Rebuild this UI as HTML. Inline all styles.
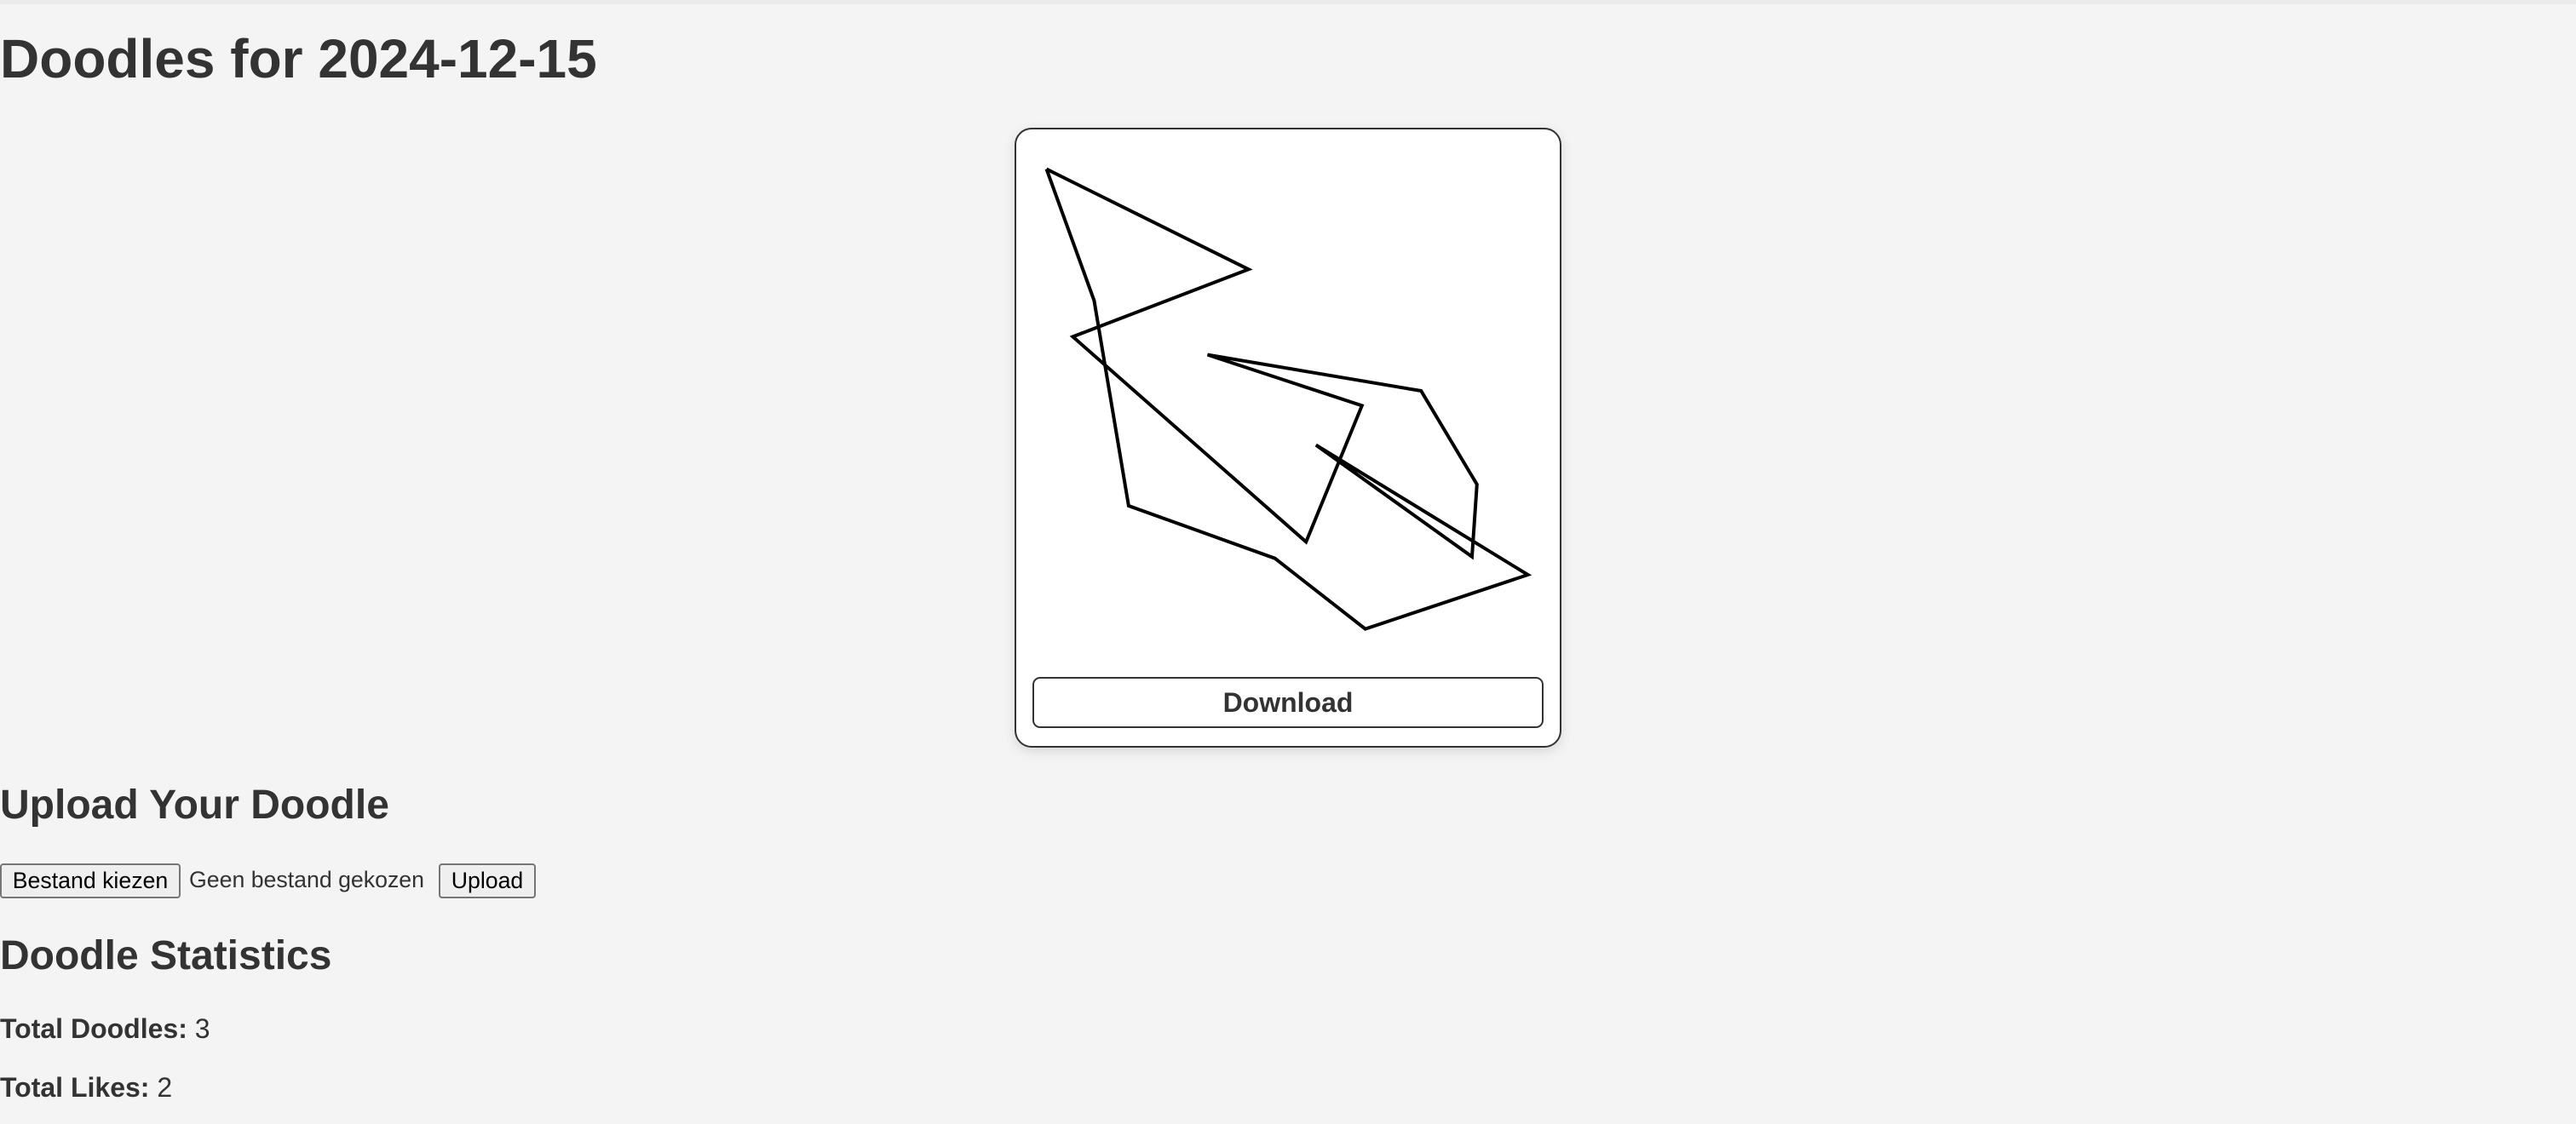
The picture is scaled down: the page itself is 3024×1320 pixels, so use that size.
<!DOCTYPE html>
<html><head><meta charset="utf-8"><style>
html,body{margin:0;padding:0;}
body{width:3024px;height:1320px;background:#f4f4f4;position:relative;overflow:hidden;font-family:"Liberation Sans",Arial,sans-serif;color:#333;}
.t{position:absolute;left:0;line-height:1;white-space:nowrap;margin:0;}
.strip{position:absolute;left:0;top:0;width:3024px;height:5px;background:#ebebeb;}
.card{position:absolute;left:1191px;top:150px;width:638px;height:724px;border:2px solid #333;border-radius:20px;background:#fff;box-shadow:0 4px 14px rgba(0,0,0,0.12);}
.dl{position:absolute;left:1212px;top:795px;width:596px;height:56px;border:2px solid #333;border-radius:9px;background:#fff;display:flex;align-items:center;justify-content:center;font-weight:bold;font-size:32px;color:#333;}
.btn{position:absolute;top:1014px;height:37px;border:2px solid #767676;border-radius:4px;background:#efefef;display:flex;align-items:center;justify-content:center;font-size:26.7px;color:#000;box-sizing:content-box;}
</style></head><body>
<div class="strip"></div>
<div class="t" style="top:37px;font-size:64px;font-weight:bold;">Doodles for 2024-12-15</div>
<div class="card"></div>
<svg style="position:absolute;left:0;top:0" width="3024" height="1320">
<polyline fill="none" stroke="#000" stroke-width="4" stroke-linejoin="miter" points="1228.5,198.6 1465.7,316.3 1259.4,395.4 1533.2,636.4 1598.8,476.4 1417.5,416.6 1668.2,459 1733.8,568.9 1728,653.8 1544.8,522.6 1793.6,675 1602.7,738.6 1496.6,655.7 1324.9,594 1284.4,352.9 1228.5,198.6"/>
</svg>
<div class="dl">Download</div>
<div class="t" style="top:922px;font-size:48px;font-weight:bold;">Upload Your Doodle</div>
<div class="btn" style="left:0;width:208px;">Bestand kiezen</div>
<div class="t" style="top:1020px;font-size:26.7px;left:222px;">Geen bestand gekozen</div>
<div class="btn" style="left:515px;width:110px;">Upload</div>
<div class="t" style="top:1099px;font-size:48px;font-weight:bold;">Doodle Statistics</div>
<div class="t" style="top:1192px;font-size:32px;"><b>Total Doodles:</b> 3</div>
<div class="t" style="top:1261px;font-size:32px;"><b>Total Likes:</b> 2</div>
</body></html>
